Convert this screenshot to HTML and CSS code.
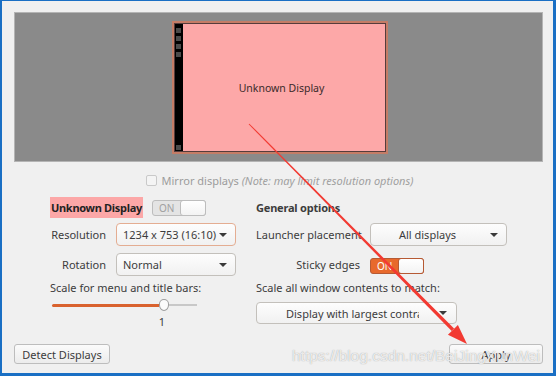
FILE: index.html
```html
<!DOCTYPE html>
<html lang="en">
<head>
    <meta charset="UTF-8">
    <meta name="viewport" content="width=device-width, initial-scale=1.0">
    <title>Displays</title>
    <link rel="stylesheet" href="styles.css">
</head>
<body>
    <div class="window">
        <div class="preview">
            <div class="monitor">
                <div class="screen">
                    <div class="launcher">
                        <span></span><span></span><span></span><span></span>
                        <span class="last"></span>
                    </div>
                    <div class="screen-name">Unknown Display</div>
                </div>
            </div>
        </div>

        <div class="mirror">
            <span class="checkbox"></span>
            <span>Mirror displays <em>(Note: may limit resolution options)</em></span>
        </div>

        <div class="options">
            <div class="display-name">
                <span class="name-tag">Unknown Display</span>
                <span class="switch">
                    <span class="switch-text">ON</span>
                    <span class="knob"></span>
                </span>
            </div>
            <div class="section-title">General options</div>

            <div class="label">Resolution</div>
            <div class="select focused">
                <span class="value">1234 x 753 (16:10)</span>
                <span class="caret"></span>
            </div>
            <div class="label clip">Launcher placement</div>
            <div class="select">
                <span class="value centered">All displays</span>
                <span class="caret"></span>
            </div>

            <div class="label">Rotation</div>
            <div class="select">
                <span class="value">Normal</span>
                <span class="caret"></span>
            </div>
            <div class="label">Sticky edges</div>
            <span class="switch active">
                <span class="switch-text">ON</span>
                <span class="knob"></span>
            </span>

            <div class="scale-label left">Scale for menu and title bars:</div>
            <div class="scale-label right">Scale all window contents to match:</div>

            <div class="slider">
                <div class="track">
                    <div class="fill"></div>
                    <div class="thumb"></div>
                    <div class="rest"></div>
                </div>
                <div class="slider-value">1</div>
            </div>
            <div class="select wide">
                <span class="value clipped">Display with largest contrast</span>
                <span class="caret"></span>
            </div>
        </div>

        <div class="footer">
            <button class="button detect">Detect Displays</button>
            <button class="button apply">Apply</button>
        </div>

        <!-- annotation drawn over the screenshot -->
        <svg class="annotation" width="556" height="376" viewBox="0 0 556 376">
            <polygon points="248.65,124.35 249.35,123.65 454.1,328.6 451.7,331.0" fill="#f23a32"/>
            <polygon points="467,344 447.9,334.7 457.9,324.9" fill="#f23a32"/>
        </svg>
        <div class="watermark">https://blog.csdn.net/BeiJingXunWei</div>
    </div>
</body>
</html>
```

FILE: styles.css
```css
html, body {
    margin: 0;
    padding: 0;
}

body {
    width: 556px;
    height: 376px;
    font-family: 'Noto Sans', sans-serif;
    font-size: 11px;
    color: #3c3c3c;
    background: #f0f0f0;
}

.window {
    position: relative;
    box-sizing: border-box;
    width: 556px;
    height: 376px;
    display: flex;
    flex-direction: column;
    background: #f0f0f0;
    border-top: 1px solid #1a6fc4;
    border-left: 2px solid #1a6fc4;
    border-right: 3px solid #1a6fc4;
    border-bottom: 3px solid #1a6fc4;
    overflow: hidden;
}

.preview {
    box-sizing: border-box;
    height: 150px;
    margin: 11px 10px 0 12px;
    background: #8a8a8a;
    border: 1px solid #b4b4b4;
    display: flex;
    justify-content: center;
    align-items: center;
}

.monitor {
    box-sizing: border-box;
    width: 216px;
    height: 133px;
    padding: 2px;
    margin-left: 2px;
    background: #c47c66;
}

.screen {
    box-sizing: border-box;
    height: 100%;
    display: flex;
    border: 1px solid #553c3c;
    background: #fda8a8;
}

.launcher {
    width: 8px;
    background: #000;
    display: flex;
    flex-direction: column;
    gap: 3px;
    padding-top: 4px;
}

.launcher span {
    width: 5px;
    height: 5px;
    margin-left: 1px;
    background: #4a4a4a;
}

.launcher .last {
    margin-top: auto;
    margin-bottom: 1px;
}

.screen-name {
    flex: 1;
    display: flex;
    justify-content: center;
    align-items: center;
    padding-top: 2px;
    padding-right: 4px;
    font-size: 10.5px;
    color: #3a2a2a;
}

.mirror {
    display: flex;
    align-items: center;
    justify-content: center;
    gap: 5px;
    height: 16px;
    margin-top: 10px;
    margin-left: 4px;
    color: #9c9c9c;
}

.mirror em {
    color: #a0a0a0;
}

.checkbox {
    box-sizing: border-box;
    width: 11px;
    height: 11px;
    border: 1px solid #c9c9c9;
    border-radius: 2px;
    background: #f4f4f4;
}

.options {
    display: grid;
    grid-template-columns: 66px 120px 134px 137px;
    grid-template-rows: 26px 30px 27px 19px auto;
    align-items: start;
    margin: 9px 0 0 48px;
}

.display-name {
    grid-column: 1 / 3;
    display: flex;
    align-items: center;
    height: 21px;
    gap: 9px;
}

.name-tag {
    background: #fca7a7;
    font-weight: 700;
    color: #222;
    line-height: 21px;
    padding: 0 1px;
    letter-spacing: -0.3px;
}

.section-title {
    grid-column: 3 / 5;
    padding-left: 20px;
    font-weight: 700;
    line-height: 21px;
    letter-spacing: -0.2px;
}

.label {
    line-height: 23px;
    text-align: right;
    padding-right: 10px;
    white-space: nowrap;
}

.label.clip {
    text-align: left;
    padding: 0 0 0 20px;
    overflow: hidden;
}

.select {
    box-sizing: border-box;
    height: 23px;
    display: flex;
    align-items: center;
    padding: 0 8px 0 6px;
    border: 1px solid #c3c0bb;
    border-radius: 4px;
    background: linear-gradient(#fdfdfd, #f1f1f1);
}

.select.focused {
    border-color: #e4ad92;
}

.value {
    flex: 1;
    white-space: nowrap;
    overflow: hidden;
}

.value.centered {
    text-align: center;
    padding-right: 12px;
}

.caret {
    width: 0;
    height: 0;
    border-left: 4px solid transparent;
    border-right: 4px solid transparent;
    border-top: 4px solid #3a3a3a;
}

.switch {
    box-sizing: border-box;
    width: 54px;
    height: 16px;
    display: flex;
    align-items: stretch;
    border: 1px solid #bdbdbd;
    border-radius: 3px;
    background: #e4e4e4;
}

.switch-text {
    flex: 1;
    display: flex;
    align-items: center;
    padding-left: 6px;
    font-size: 10px;
    color: #a0a0a0;
}

.knob {
    box-sizing: border-box;
    width: 26px;
    margin: -1px -1px -1px 0;
    border: 1px solid #bdbdbd;
    border-radius: 3px;
    background: linear-gradient(#ffffff, #f3f3f3);
}

.switch.active {
    align-self: center;
    margin-bottom: 1px;
    background: #e8692c;
    border-color: #b65a34;
}

.switch.active .switch-text {
    color: #fff;
}

.switch.active .knob {
    border-color: #b65a34;
}

.scale-label {
    line-height: 16px;
    white-space: nowrap;
}

.scale-label.left {
    grid-column: 1 / 3;
}

.scale-label.right {
    grid-column: 3 / 5;
    padding-left: 20px;
}

.slider {
    grid-column: 1 / 3;
    width: 145px;
    padding-left: 2px;
}

.track {
    display: flex;
    align-items: center;
    height: 12px;
}

.fill {
    width: 107px;
    height: 3px;
    background: #d9622e;
    border-radius: 2px 0 0 2px;
}

.thumb {
    box-sizing: border-box;
    width: 10px;
    height: 12px;
    border: 1px solid #9d9d9d;
    border-radius: 5px 5px 5px 5px / 5px 5px 6px 6px;
    background: #fbfbfb;
}

.rest {
    flex: 1;
    height: 2px;
    background: #c8c8c8;
}

.slider-value {
    width: 113px;
    text-align: right;
    line-height: 12px;
    margin-top: 5px;
}

.select.wide {
    grid-column: 3 / 5;
    width: 201px;
    height: 22px;
    margin: 3px 0 0 20px;
    padding-left: 29px;
    padding-right: 9px;
}

.value.clipped {
    flex: 0 0 133px;
    margin-right: auto;
}

.footer {
    margin-top: auto;
    display: flex;
    justify-content: space-between;
    padding: 0 10px 9px 12px;
}

.button {
    box-sizing: border-box;
    height: 20px;
    padding: 0;
    border: 1px solid #bdbdbd;
    border-radius: 3px;
    background: linear-gradient(#fbfbfb, #ececec);
    font-family: 'Noto Sans', sans-serif;
    font-size: 11px;
    color: #3c3c3c;
}

.detect {
    width: 96px;
}

.apply {
    width: 94px;
}

.annotation {
    position: absolute;
    left: -2px;
    top: -1px;
    pointer-events: none;
}

.watermark {
    position: absolute;
    left: 290px;
    top: 345px;
    font-family: 'Liberation Sans', sans-serif;
    font-size: 15.5px;
    line-height: 20px;
    color: rgba(255, 255, 255, 0.8);
    text-shadow: 0 0 1px rgba(140, 140, 140, 0.9);
    white-space: nowrap;
    pointer-events: none;
}
```
